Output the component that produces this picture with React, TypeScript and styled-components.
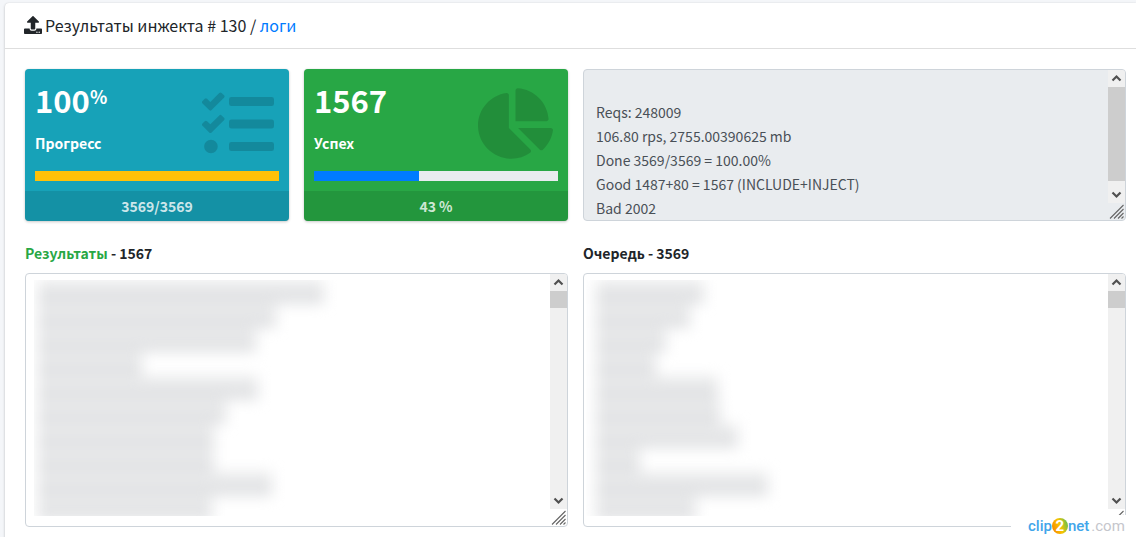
import React from "react";
import styled, { createGlobalStyle } from "styled-components";
import { FaUpload, FaTasks, FaChartPie } from "react-icons/fa";

const GlobalStyle = createGlobalStyle`
  *, *::before, *::after { box-sizing: border-box; }
  body {
    margin: 0;
    background: #f4f6f9;
    color: #212529;
    font-family: "Noto Sans CJK SC", "Noto Sans", sans-serif;
    font-size: 14px;
    line-height: 24px;
    overflow: hidden;
  }
`;

const Page = styled.main`
  height: 100vh;
  padding: 3px 0 0 5px;
  overflow: hidden;
`;

const Card = styled.section`
  min-height: 100vh;
  background: #fff;
  border-radius: 4px 0 0 0;
  box-shadow: 0 0 1px rgba(0, 0, 0, 0.13), 0 1px 3px rgba(0, 0, 0, 0.2);
`;

const CardHeader = styled.header`
  display: flex;
  align-items: center;
  gap: 3px;
  height: 46px;
  padding: 0 19px 2px;
  border-bottom: 1px solid rgba(0, 0, 0, 0.13);
`;

const Title = styled.h1`
  margin: 0;
  font-size: 16px;
  font-weight: 400;
`;

const Link = styled.a`
  color: #007bff;
  text-decoration: none;
`;

const CardBody = styled.div`
  display: grid;
  grid-template-columns: repeat(4, 1fr);
  gap: 20px 15px;
  padding: 20px 10px 20px 20px;
`;

const StatBox = styled.article<{ $color: string }>`
  position: relative;
  display: flex;
  flex-direction: column;
  height: 152px;
  border-radius: 4px;
  overflow: hidden;
  background: ${(p) => p.$color};
  color: #fff;
  font-weight: 700;
  box-shadow: 0 0 1px rgba(0, 0, 0, 0.13), 0 1px 3px rgba(0, 0, 0, 0.2);
`;

const StatInner = styled.div`
  flex: 1;
  padding: 10px;
`;

const StatValue = styled.h2`
  display: flex;
  margin: 0 0 10px;
  font-size: 31px;
  line-height: 42px;
`;

const Unit = styled.sup`
  font-size: 18px;
  line-height: 34px;
`;

const StatLabel = styled.p`
  margin: 0 0 16px;
  line-height: 24px;
`;

const StatIcon = styled.div<{ $top: number }>`
  position: absolute;
  top: ${(p) => p.$top}px;
  right: 15px;
  display: flex;
  color: rgba(0, 0, 0, 0.15);
`;

const Track = styled.div<{ $color: string }>`
  height: 10px;
  background: #e9ecef;
  & > div {
    height: 100%;
    background: ${(p) => p.$color};
  }
`;

const StatFooter = styled.footer`
  height: 30px;
  line-height: 30px;
  background: rgba(0, 0, 0, 0.1);
  color: rgba(255, 255, 255, 0.8);
  text-align: center;
`;

const Wide = styled.div`
  grid-column: span 2;
`;

const Label = styled.label`
  display: block;
  margin-bottom: 8px;
  font-weight: 700;
`;

const Green = styled.span`
  color: #28a745;
`;

const Field = styled.div<{ $height: number; $muted?: boolean }>`
  position: relative;
  display: flex;
  height: ${(p) => p.$height}px;
  border: 1px solid #ced4da;
  border-radius: 4px;
  overflow: hidden;
  background: ${(p) => (p.$muted ? "#e9ecef" : "#fff")};
`;

const TextArea = styled.textarea`
  flex: 1;
  min-width: 0;
  padding: 6px 12px;
  border: 0;
  outline: 0;
  resize: none;
  overflow: hidden;
  background: transparent;
  color: #495057;
  font: inherit;
  line-height: 24px;
`;

const Bar = styled.div`
  display: flex;
  flex-direction: column;
  width: 17px;
`;

const Rail = styled.div`
  flex: 1;
  background: #f0f0f0;
`;

const Thumb = styled.div<{ $height: number }>`
  height: ${(p) => p.$height}px;
  background: #cdcdcd;
`;

const ArrowButton = styled.button`
  display: flex;
  width: 17px;
  height: 17px;
  padding: 0;
  border: 0;
  background: #f0f0f0;
`;

const Masked = styled.div<{ $left: number }>`
  position: absolute;
  top: 6px;
  bottom: 10px;
  left: ${(p) => p.$left}px;
  right: 20px;
  overflow: hidden;
  pointer-events: none;
`;

const MaskedRows = styled.div<{ $indent: number }>`
  padding-left: ${(p) => p.$indent}px;
  filter: blur(7px);
`;

const MaskedRow = styled.div`
  height: 24px;
  background: linear-gradient(#e9eaeb 50%, #e1e2e4 50%);
`;

const Watermark = styled.div`
  position: fixed;
  right: 0;
  bottom: 0;
  display: flex;
  align-items: center;
  width: 125px;
  height: 22px;
  padding-left: 17px;
  background: #fff;
  color: #41a5ea;
  font-family: Roboto, sans-serif;
  font-size: 15px;
  font-weight: 500;
  line-height: 22px;
`;

const Badge = styled.span`
  width: 16px;
  height: 16px;
  border-radius: 50%;
  background: linear-gradient(70deg, #f58a00 10%, #f9c400 50%, #6cc04a 90%);
  color: #fff;
  font-weight: 700;
  line-height: 16px;
  text-align: center;
`;

const Domain = styled.span`
  margin-left: 2px;
  color: #c5c6cc;
  font-weight: 400;
`;

const Arrow = ({ down }: { down?: boolean }) => (
  <svg width="17" height="17" viewBox="0 0 17 17" fill="none" stroke="#505050" strokeWidth="2.2">
    <path d={down ? "M4.5 6.5L8.5 10.5L12.5 6.5" : "M4.5 10.5L8.5 6.5L12.5 10.5"} />
  </svg>
);

const Grip = () => (
  <svg width="17" height="17" viewBox="0 0 17 17" stroke="#666" strokeWidth="1.1">
    <path d="M2 15.5L15.5 2M6 15.5L15.5 6M10 15.5L15.5 10M13.5 15.5L15.5 13.5" />
  </svg>
);

const ScrollBar = ({ thumb }: { thumb: number }) => (
  <Bar>
    <ArrowButton type="button" aria-label="Вверх"><Arrow /></ArrowButton>
    <Rail><Thumb $height={thumb} /></Rail>
    <ArrowButton type="button" aria-label="Вниз"><Arrow down /></ArrowButton>
    <Grip />
  </Bar>
);

const log = `
Reqs: 248009
106.80 rps, 2755.00390625 mb
Done 3569/3569 = 100.00%
Good 1487+80 = 1567 (INCLUDE+INJECT)
Bad 2002`;

const resultRows = [286, 238, 218, 104, 220, 188, 176, 176, 234, 174];
const queueRows = [108, 94, 70, 60, 122, 124, 142, 44, 172, 100];

const MaskedText = ({ rows, left, indent }: { rows: number[]; left: number; indent: number }) => (
  <Masked $left={left}>
    <MaskedRows $indent={indent}>
      {rows.map((width, i) => (
        <MaskedRow key={i} style={{ width }} />
      ))}
    </MaskedRows>
  </Masked>
);

export default function App() {
  return (
    <>
      <GlobalStyle />
      <Page>
        <Card>
          <CardHeader>
            <FaUpload size={18} />
            <Title>
              Результаты инжекта # 130 / <Link href="#logs">логи</Link>
            </Title>
          </CardHeader>
          <CardBody>
            <StatBox $color="#17a2b8">
              <StatInner>
                <StatValue>100<Unit>%</Unit></StatValue>
                <StatLabel>Прогресс</StatLabel>
                <Track $color="#ffc107"><div style={{ width: "100%" }} /></Track>
              </StatInner>
              <StatIcon $top={19}><FaTasks size={72} /></StatIcon>
              <StatFooter>3569/3569</StatFooter>
            </StatBox>
            <StatBox $color="#28a745">
              <StatInner>
                <StatValue>1567</StatValue>
                <StatLabel>Успех</StatLabel>
                <Track $color="#007bff"><div style={{ width: "43%" }} /></Track>
              </StatInner>
              <StatIcon $top={17}><FaChartPie size={75} /></StatIcon>
              <StatFooter>43 %</StatFooter>
            </StatBox>
            <Wide>
              <Field $height={152} $muted>
                <TextArea aria-label="Статус" readOnly value={log} />
                <ScrollBar thumb={94} />
              </Field>
            </Wide>
            <Wide>
              <Label htmlFor="results"><Green>Результаты</Green> - 1567</Label>
              <Field $height={254}>
                <TextArea id="results" />
                <MaskedText rows={resultRows} left={8} indent={4} />
                <ScrollBar thumb={17} />
              </Field>
            </Wide>
            <Wide>
              <Label htmlFor="queue">Очередь - 3569</Label>
              <Field $height={254}>
                <TextArea id="queue" />
                <MaskedText rows={queueRows} left={2} indent={10} />
                <ScrollBar thumb={17} />
              </Field>
            </Wide>
          </CardBody>
        </Card>
      </Page>
      <Watermark>
        clip<Badge>2</Badge>net<Domain>.com</Domain>
      </Watermark>
    </>
  );
}
